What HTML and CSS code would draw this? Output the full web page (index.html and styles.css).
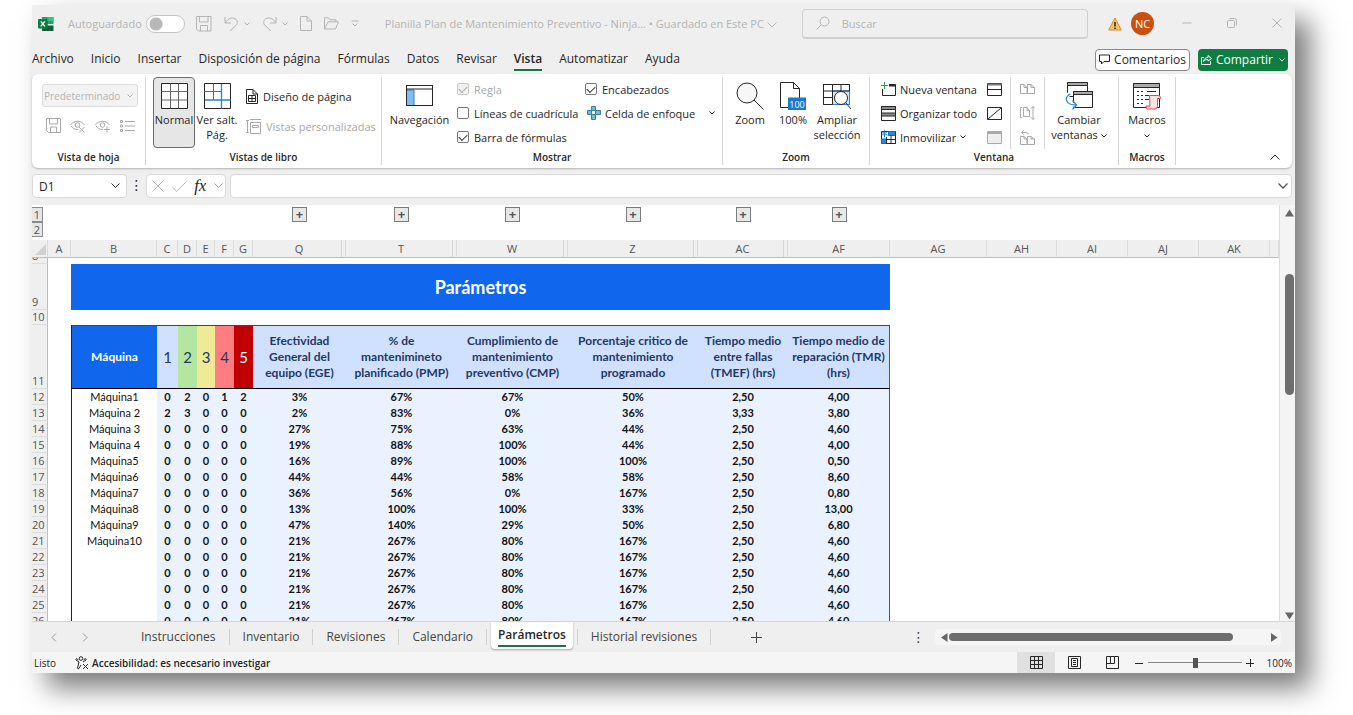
FILE: index.html
```html
<!DOCTYPE html>
<html lang="es">
<head>
<meta charset="utf-8">
<title>Planilla Plan de Mantenimiento Preventivo</title>
<link rel="stylesheet" href="styles.css">
</head>
<body>
<div class="window">
  <header class="titlebar">
    <svg class="app-logo" width="16" height="16" viewBox="0 0 16 16"><path fill="#21a366" d="M4 1h11.500v7H4z"/><path fill="#33c481" d="M9.500 1h6v4h-6z"/><path fill="#107c41" d="M4 5h5.500v5H4z"/><path fill="#185c37" d="M4 9.500h11.500v5.500H4z"/><rect y="3" width="9.500" height="9.500" rx="1" fill="#107c41"/><path d="M2.800 5.300l4 5M6.800 5.300l-4 5" stroke="#fff" stroke-width="1.300"/></svg>
    <label class="autosave">Autoguardado <input type="checkbox" class="switch"></label>
    <div class="quick">
      <button aria-label="Guardar"><svg width="16" height="16" viewBox="0 0 16 16"><path d="M.5.5h14.500v14.500H2.500l-2-2zM3.500.5v5.500h8.500V.5M4.500 15V9.500h7V15"/></svg></button>
      <button aria-label="Deshacer"><svg width="15" height="16" viewBox="0 0 15 16"><path d="M1 1v6h6M1.500 6.500C4 3 6 2 8.500 2c4 0 6 4 4 7L6 15"/></svg><svg class="chev" width="6" height="4" viewBox="0 0 6 4"><path d="M.5.5L3 3 5.500.5"/></svg></button>
      <button aria-label="Rehacer"><svg width="15" height="16" viewBox="0 0 15 16"><path d="M14 1v6H8M13.500 6.500C11 3 9 2 6.500 2c-4 0-6 4-4 7L9 15"/></svg><svg class="chev" width="6" height="4" viewBox="0 0 6 4"><path d="M.5.5L3 3 5.500.5"/></svg></button>
      <button aria-label="Nuevo"><svg width="12" height="15" viewBox="0 0 12 15"><path d="M.5.5h6.500l4.500 4.500v9.500H.5zM7 .5V5h4.500"/></svg></button>
      <button aria-label="Abrir"><svg width="15" height="13" viewBox="0 0 15 13"><path d="M.5 12V.8h4l1.500 2h6v2M.5 12L4 4.800h10.500L11.500 12z"/></svg></button>
      <button aria-label="Personalizar"><svg width="8" height="7" viewBox="0 0 8 7"><path d="M.5 1h7M1.500 3.500L4 6l2.500-2.500"/></svg></button>
    </div>
    <div class="doc-name">Planilla Plan de Mantenimiento Preventivo - Ninja... • Guardado en Este PC <svg width="10" height="6" viewBox="0 0 10 6"><path d="M.5.5L5 5 9.500.5"/></svg></div>
    <label class="search"><svg width="14" height="14" viewBox="0 0 14 14"><circle cx="8.500" cy="5.500" r="4.500"/><path d="M5.200 8.800L.5 13.500"/></svg><input type="search" placeholder="Buscar" aria-label="Buscar"></label>
    <svg class="warn" width="14" height="14" viewBox="0 0 14 14"><path d="M7 1L13.300 13H.7z" fill="#fbc566" stroke="#d98a2b"/><path d="M7 5v4.500M7 10.500V12" stroke="#222" stroke-width="1.500"/></svg>
    <span class="avatar">NC</span>
    <div class="win-buttons">
      <button aria-label="Minimizar"><svg width="10" height="10" viewBox="0 0 10 10"><path d="M.5 5h9"/></svg></button>
      <button aria-label="Restaurar"><svg width="10" height="10" viewBox="0 0 10 10"><rect x=".5" y="2.500" width="7" height="7" rx="1"/><path d="M2.500.5h5a2 2 0 012 2v5"/></svg></button>
      <button aria-label="Cerrar"><svg width="10" height="10" viewBox="0 0 10 10"><path d="M.5.5l9 9M9.500.5l-9 9"/></svg></button>
    </div>
  </header>

  <nav class="menu">
    <a href="#">Archivo</a><a href="#">Inicio</a><a href="#">Insertar</a><a href="#">Disposición de página</a><a href="#">Fórmulas</a><a href="#">Datos</a><a href="#">Revisar</a><a href="#" class="current">Vista</a><a href="#">Automatizar</a><a href="#">Ayuda</a>
    <div class="menu-actions">
      <button class="comments"><svg width="11" height="11" viewBox="0 0 11 11"><path d="M.5 1h10v6.500H5L2.500 10V7.500h-2z"/></svg>Comentarios</button>
      <button class="share"><svg width="11" height="11" viewBox="0 0 11 11"><path d="M3 3.500H.5v7h9V7M2.500 7.500C3 4.500 5 3.500 7 3.500V1.500L10.500 4.500 7 7V5.500c-2 0-3.500.5-4.500 2z"/></svg>Compartir<svg width="6" height="4" viewBox="0 0 6 4"><path d="M.5.5L3 3 5.500.5"/></svg></button>
    </div>
  </nav>

  <section class="ribbon">
    <div class="group g-sheetview">
      <div class="content col">
        <div class="select"><select disabled aria-label="Vista de hoja"><option>Predeterminado</option></select><svg width="6" height="4" viewBox="0 0 6 4"><path d="M.5.5L3 3 5.500.5"/></svg></div>
        <div class="row dim small-icons">
          <button aria-label="Mantener"><svg width="15" height="15" viewBox="0 0 15 15"><path d="M.5.5h14v14H2.500l-2-2zM3.500.5v5.500h8V.5M4.500 14.500V9h6v5.500"/></svg></button>
          <button aria-label="Salir"><svg width="16" height="14" viewBox="0 0 16 14"><path d="M.5 6C4 1 11 1 14.500 6M1 7c2 2.500 4 3.500 7 3.500"/><circle cx="7.500" cy="6" r="2.300"/><path d="M9 8l5.500 5.500M14.500 8L9 13.500"/></svg></button>
          <button aria-label="Nueva"><svg width="16" height="14" viewBox="0 0 16 14"><path d="M.5 6C4 1 11 1 14.500 6M1 7c2 2.500 4 3.500 7 3.500"/><circle cx="7.500" cy="6" r="2.300"/><path d="M12 7.500v6M9 10.500h6"/></svg></button>
          <button aria-label="Opciones"><svg width="15" height="12" viewBox="0 0 15 12"><path d="M5 1.500h10M5 6h10M5 10.500h10"/><path d="M.5.5h2v2h-2zM.5 5h2v2h-2zM.5 9.500h2v2h-2z"/></svg></button>
        </div>
      </div>
      <h2>Vista de hoja</h2>
    </div>
    <div class="group g-books">
      <div class="content">
        <button class="big pressed"><svg width="27" height="26" viewBox="0 0 27 26"><path class="w" d="M.5.5h26v25H.5z"/><path d="M9.500.5v25M17.500.5v25M.5 8.500h26M.5 17h26" stroke="#666"/></svg><span>Normal</span></button>
        <button class="big brk"><svg width="27" height="26" viewBox="0 0 27 26"><path class="w" d="M.5.5h26v25H.5z"/><path stroke="#666" d="M9.500.5v16M.5 8.500h17"/><path stroke="#1e88c9" stroke-width="1.300" d="M17.500 1v24.500M1 17h25.500"/></svg><span>Ver salt.<br>Pág.</span></button>
        <div class="stack two">
          <button><svg width="12" height="15" viewBox="0 0 12 15"><path class="w" d="M.5.5h6.500l4.500 4.500v9.500H.5zM7 .5V5h4.500"/><path d="M2.500 6.500h7v6h-7zM6 6.500v6M2.500 9.500h7"/></svg>Diseño de página</button>
          <button class="dim"><svg width="15" height="15" viewBox="0 0 15 15"><path d="M1.500 1.500v12M0 1.500h3M0 13.500h3M4 .5h11M4.500 3.500h10v11h-10zM6.500 6.500h6v2h-6z"/></svg>Vistas personalizadas</button>
        </div>
      </div>
      <h2>Vistas de libro</h2>
    </div>
    <div class="group g-show">
      <div class="content">
        <button class="big nav"><svg width="27" height="26" viewBox="0 0 27 26"><path class="w" d="M.5 2.500h26v20H.5z"/><path fill="#83bdeb" stroke="#2b7cc1" d="M.5 7h7.500v15.500H.5z"/><path d="M.5 2.500h26v20H.5zM.5 6h26"/></svg><span>Navegación</span></button>
        <div class="stack checks">
          <label class="dim"><input type="checkbox" checked disabled>Regla</label>
          <label><input type="checkbox">Líneas de cuadrícula</label>
          <label><input type="checkbox" checked>Barra de fórmulas</label>
        </div>
        <div class="stack checks">
          <label><input type="checkbox" checked>Encabezados</label>
          <button class="focus"><svg width="14" height="14" viewBox="0 0 14 14"><path fill="#74b9e4" stroke="#3a7ca8" d="M4.500.5h4v4h5v4h-5v5h-4v-5h-4v-4h4z"/><path fill="#fff" stroke="#3a8a6a" d="M4.500 4.500h4v4h-4z"/></svg>Celda de enfoque<svg class="chev" width="6" height="4" viewBox="0 0 6 4"><path d="M.5.5L3 3 5.500.5"/></svg></button>
        </div>
      </div>
      <h2>Mostrar</h2>
    </div>
    <div class="group g-zoom">
      <div class="content">
        <button class="big zoom"><svg width="28" height="28" viewBox="0 0 28 28"><circle cx="11" cy="11" r="10" fill="#f7f7f7"/><path d="M18 18l9.500 9.500"/></svg><span>Zoom</span></button>
        <button class="big hundred"><svg width="26" height="28" viewBox="0 0 26 28"><path class="w" d="M.5.5h13l6 6v19H.5zM13.500.5v6h6"/><path fill="#1979ca" stroke="none" d="M8 15.500h18V28H8z"/><text x="17" y="25.500" text-anchor="middle" class="tiny">100</text></svg><span>100%</span></button>
        <button class="big fit"><svg width="28" height="28" viewBox="0 0 28 28"><path class="w" d="M.5 2.500h26v20H.5z"/><path fill="#cde6f7" stroke="#2b88d8" d="M9.500 9h17v13.500h-17z"/><path d="M.5 2.500h26v6.500H.5zM9.500 2.500v20M18 2.500V9M.5 15.500h9M.5 22.500h9"/><circle cx="18" cy="16" r="6.500" fill="#fff"/><path d="M22.500 20.500l5.500 6.500"/></svg><span>Ampliar<br>selección</span></button>
      </div>
      <h2>Zoom</h2>
    </div>
    <div class="group g-window">
      <div class="content">
        <div class="stack">
          <button><svg width="15" height="14" viewBox="0 0 15 14"><path d="M8 2.500h6.500v11H1.500V7"/><path d="M8 3.500h6.500" stroke-width="2"/><path stroke="#2e9e4f" d="M3.500 0v7M0 3.500h7"/></svg>Nueva ventana</button>
          <button><svg width="15" height="15" viewBox="0 0 15 15"><path class="w" d="M.5.500h14v14H.5z"/><path fill="#8a8a8a" d="M.5.5h14v3H.5zM.5 7h14v3H.5z"/></svg>Organizar todo</button>
          <button><svg width="15" height="15" viewBox="0 0 15 15"><path class="w" d="M.5 1.500h14v12H.5z"/><path fill="#2b88d8" stroke="#1b6db3" d="M7.500 1.500h7v4h-7zM.5 9h5v4.500h-5z"/><path stroke="#1b88c9" d="M3.500 0v7M.5 1.700l6 3.600M6.500 1.700l-6 3.600"/><path d="M5.500 7v6.500M10 5.500v8M14.500 2v11.500h-9M5.500 9.500h9"/></svg>Inmovilizar<svg class="chev" width="6" height="4" viewBox="0 0 6 4"><path d="M.5.5L3 3 5.500.5"/></svg></button>
        </div>
        <div class="stack icons">
          <button aria-label="Dividir"><svg width="15" height="13" viewBox="0 0 15 13"><path class="w" d="M.5.5h14v12H.5zM.5 6.500h14"/><path d="M.5 1.500h14" stroke-width="2" stroke="#777"/></svg></button>
          <button aria-label="Ocultar"><svg width="15" height="13" viewBox="0 0 15 13"><path class="w" d="M.5.5h14v12H.5zM1 12L14 1"/></svg></button>
          <button aria-label="Mostrar" class="dim"><svg width="15" height="13" viewBox="0 0 15 13"><path fill="#eee" d="M.5.5h14v12H.5z"/><path d="M.5 2h14" stroke-width="2"/></svg></button>
        </div>
        <div class="stack icons dim lined">
          <button aria-label="Ver en paralelo"><svg width="15" height="13" viewBox="0 0 15 13"><path d="M.5 1.500H4l3 3v6H.5zM4 1.500v3h3M7.500 1.500H11l3.500 3v6h-7zM11 1.500v3h3.500"/></svg></button>
          <button aria-label="Desplazamiento sincrónico"><svg width="15" height="14" viewBox="0 0 15 14"><path d="M2 1.500H.5v10H2M3.500 1.500h3.500l2.500 3v6h-6zM7 1.500v3h2.500M13 .5v13M11 2.500l2-2 2 2M11 11.500l2 2 2-2"/></svg></button>
          <button aria-label="Restablecer"><svg width="15" height="15" viewBox="0 0 15 15"><path d="M.5 6.500H4l3 2.500v5.500H.5zM4 6.500V9h3M7.500 6.500H11l3.500 2.500v5.500h-7zM11 6.500V9h3.500M3.500.5L1.500 2.500l2 2M1.500 2.500H6q2 0 2 2"/></svg></button>
        </div>
        <button class="big switcher"><svg width="28" height="28" viewBox="0 0 28 28"><path class="w" d="M2.500.5h20v14h-20z"/><path fill="#aaa" d="M2.500.5h20v3h-20z"/><path class="w" d="M8.500 9.500h19v16h-19z"/><path fill="#aaa" d="M8.500 9.500h19v3h-19z"/><path fill="none" stroke="#fff" stroke-width="4" d="M5.500 11C-1 15 0 23 10 23"/><path stroke="#2b88d8" stroke-width="1.300" d="M5.500 12C-1 15 0 23 11 23M7.500 18.500l4 4.500-4 4.500"/></svg><span>Cambiar<br>ventanas <svg class="chev" width="6" height="4" viewBox="0 0 6 4"><path d="M.5.5L3 3 5.500.5"/></svg></span></button>
      </div>
      <h2>Ventana</h2>
    </div>
    <div class="group g-macros">
      <div class="content">
        <button class="big"><svg width="28" height="28" viewBox="0 0 28 28"><path class="w" d="M.5 1.500h26v24H.5z"/><path fill="#aaa" d="M.5 1.500h26v4H.5z"/><path stroke-dasharray="2 2" d="M4 9.500h7M4 13.500h7M4 17.500h7M4 21.500h7"/><path d="M14 9.500h9M12 13.500h4M12 17.500h4"/><path fill="#fbe3e1" stroke="#d8504a" d="M16.500 13.500h9q2 0 2 3h-3v7q0 3.500-2.500 3.500h-8q-1 0-1-3h4z"/></svg><span>Macros<br><svg class="chev" width="6" height="4" viewBox="0 0 6 4"><path d="M.5.5L3 3 5.500.5"/></svg></span></button>
      </div>
      <h2>Macros</h2>
    </div>
    <button class="collapse" aria-label="Contraer la cinta"><svg width="10" height="6" viewBox="0 0 10 6"><path d="M.5 5.500L5 1l4.500 4.500"/></svg></button>
  </section>

  <div class="formula-bar">
    <div class="name-box"><input type="text" value="D1" aria-label="Cuadro de nombres"><svg width="9" height="6" viewBox="0 0 9 6"><path d="M.5.5l4 4 4-4"/></svg></div>
    <span class="dots">⋮</span>
    <div class="fx"><button aria-label="Cancelar"><svg width="12" height="12" viewBox="0 0 12 12"><path stroke="#bbb" d="M.5.5l11 11M11.500.5l-11 11"/></svg></button><button aria-label="Aceptar"><svg width="15" height="11" viewBox="0 0 15 11"><path stroke="#bbb" d="M.5 6l4 4.500L14.500.5"/></svg></button><button class="fx-label">fx</button><button aria-label="Funciones"><svg width="9" height="6" viewBox="0 0 9 6"><path stroke="#999" d="M.5.5l4 4 4-4"/></svg></button></div>
    <div class="formula"><input type="text" aria-label="Barra de fórmulas"><svg width="10" height="6" viewBox="0 0 10 6"><path stroke="#555" stroke-width="1.300" d="M.5.5L5 5 9.500.5"/></svg></div>
  </div>

  <main class="sheet">
    <div class="grid">
      <table>
        <colgroup><col class="w16"><col class="w23"><col class="w86"><col class="w21"><col class="w19"><col class="w18"><col class="w19"><col class="w19"><col class="w93"><col class="w111"><col class="w111"><col class="w130"><col class="w90"><col class="w102"><col class="w97"><col class="w70"><col class="w71"><col class="w71"><col class="w71"><col></colgroup>
        <thead>
          <tr class="outline"><td><button class="level">1</button><button class="level">2</button></td><td colspan="7"></td><td><button class="plus">+</button></td><td><button class="plus">+</button></td><td><button class="plus">+</button></td><td><button class="plus">+</button></td><td><button class="plus">+</button></td><td><button class="plus">+</button></td><td colspan="6"></td></tr>
          <tr class="letters"><th class="corner"><svg width="12" height="12" viewBox="0 0 12 12"><path d="M12 1v11H1z"/></svg></th><th>A</th><th>B</th><th>C</th><th>D</th><th>E</th><th>F</th><th>G</th><th class="hid">Q</th><th class="hid">T</th><th class="hid">W</th><th class="hid">Z</th><th class="hid">AC</th><th>AF</th><th>AG</th><th>AH</th><th>AI</th><th>AJ</th><th>AK</th><th></th></tr>
        </thead>
        <tbody id="rows">
          <tr class="r8"><th><div>8</div></th><td colspan="19"></td></tr>
          <tr class="r9"><th>9</th><td></td><td colspan="12" class="banner">Parámetros</td><td colspan="6"></td></tr>
          <tr class="r10"><th>10</th><td colspan="19"></td></tr>
          <tr class="r11"><th>11</th><td></td><td class="machine">Máquina</td><td class="lv">1</td><td class="lv l2">2</td><td class="lv l3">3</td><td class="lv l4">4</td><td class="lv l5">5</td><td>Efectividad<br>General del<br>equipo (EGE)</td><td>% de<br>mantenimineto<br>planificado (PMP)</td><td>Cumplimiento de<br>mantenimiento<br>preventivo (CMP)</td><td>Porcentaje critico de<br>mantenimiento<br>programado</td><td>Tiempo medio<br>entre fallas<br>(TMEF) (hrs)</td><td class="last">Tiempo medio de<br>reparación (TMR)<br>(hrs)</td><td class="blank" colspan="6"></td></tr>
        </tbody>
      </table>
    </div>
    <div class="vscroll"><svg width="9" height="8" viewBox="0 0 9 8"><path d="M4.500.5L9 7.500H0z"/></svg><span></span><svg width="9" height="8" viewBox="0 0 9 8"><path d="M4.500 7.500L9 .5H0z"/></svg></div>
  </main>

  <footer class="tabs">
    <button class="arrow" aria-label="Anterior"><svg width="6" height="9" viewBox="0 0 6 9"><path d="M5 .5l-4 4 4 4"/></svg></button>
    <button class="arrow" aria-label="Siguiente"><svg width="6" height="9" viewBox="0 0 6 9"><path d="M1 .5l4 4-4 4"/></svg></button>
    <div class="tab-list"><button>Instrucciones</button><button>Inventario</button><button>Revisiones</button><button>Calendario</button><button class="active"><span>Parámetros</span></button><button class="hist">Historial revisiones</button></div>
    <button class="add" aria-label="Nueva hoja"><svg width="11" height="11" viewBox="0 0 11 11"><path d="M5.500 0v11M0 5.500h11"/></svg></button>
    <span class="dots">⋮</span>
    <div class="hscroll"><svg width="7" height="9" viewBox="0 0 7 9"><path d="M0 4.500L6.500 0v9z"/></svg><span></span><svg width="7" height="9" viewBox="0 0 7 9"><path d="M6.500 4.500L0 0v9z"/></svg></div>
  </footer>
  <footer class="status">
    <span class="ready">Listo</span>
    <svg width="14" height="14" viewBox="0 0 14 14"><circle cx="6" cy="2.500" r="1.800"/><path d="M3.500 4L1.500 2.500q-1 .5-.5 1.500l3 2L2.500 12q.5 1.500 1.500.5L6 9M8.500 4l2-1.500q1 .5.500 1.500l-3 2M8 8l5 5M13 8l-5 5"/></svg>
    <strong>Accesibilidad: es necesario investigar</strong>
    <div class="views">
      <button class="on" aria-label="Normal"><svg width="13" height="13" viewBox="0 0 13 13"><path d="M.5.500h12v12H.5zM4.500.5v12M8.500.5v12M.5 4.500h12M.5 8.500h12"/></svg></button>
      <button aria-label="Diseño de página"><svg width="13" height="13" viewBox="0 0 13 13"><path d="M.5.5h12v12H.5zM3.500 2.500h6v8h-6zM5 4.500h3M5 6.500h3M5 8.500h3"/></svg></button>
      <button aria-label="Saltos de página"><svg width="13" height="13" viewBox="0 0 13 13"><path d="M.5.5h12v12H.5zM4.500.5v7M8.500.5v7M.5 7.500h8"/></svg></button>
    </div>
    <button class="step" aria-label="Alejar"><svg width="8" height="8" viewBox="0 0 8 8"><path d="M0 4.500h8"/></svg></button>
    <input type="range" min="0" max="100" value="50" aria-label="Zoom">
    <button class="step" aria-label="Acercar"><svg width="8" height="8" viewBox="0 0 8 8"><path d="M0 4.500h8M4.500 0v8"/></svg></button>
    <span class="pct">100%</span>
  </footer>
</div>
<script src="rows.js"></script>
</body>
</html>
```
FILE: rows.js
```js
const data = [
  ["Máquina1", 0, 2, 0, 1, 2, "3%", "67%", "67%", "50%", "2,50", "4,00"],
  ["Máquina 2", 2, 3, 0, 0, 0, "2%", "83%", "0%", "36%", "3,33", "3,80"],
  ["Máquina 3", 0, 0, 0, 0, 0, "27%", "75%", "63%", "44%", "2,50", "4,60"],
  ["Máquina 4", 0, 0, 0, 0, 0, "19%", "88%", "100%", "44%", "2,50", "4,00"],
  ["Máquina5", 0, 0, 0, 0, 0, "16%", "89%", "100%", "100%", "2,50", "0,50"],
  ["Máquina6", 0, 0, 0, 0, 0, "44%", "44%", "58%", "58%", "2,50", "8,60"],
  ["Máquina7", 0, 0, 0, 0, 0, "36%", "56%", "0%", "167%", "2,50", "0,80"],
  ["Máquina8", 0, 0, 0, 0, 0, "13%", "100%", "100%", "33%", "2,50", "13,00"],
  ["Máquina9", 0, 0, 0, 0, 0, "47%", "140%", "29%", "50%", "2,50", "6,80"],
  ["Máquina10", 0, 0, 0, 0, 0, "21%", "267%", "80%", "167%", "2,50", "4,60"]
];
const rest = ["", 0, 0, 0, 0, 0, "21%", "267%", "80%", "167%", "2,50", "4,60"];
while (data.length < 15) data.push(rest);

const body = document.getElementById("rows");
data.forEach((cells, i) => {
  const tr = body.insertRow();
  tr.className = "data";
  const head = document.createElement("th");
  head.textContent = 12 + i;
  tr.append(head);
  tr.insertCell();
  cells.forEach((value, k) => {
    const td = tr.insertCell();
    td.textContent = value;
    if (k === 0) td.className = "name";
    if (k === cells.length - 1) td.className = "last";
  });
  const blank = tr.insertCell();
  blank.colSpan = 6;
  blank.className = "blank";
});
```
FILE: styles.css
```css
* { box-sizing: border-box; }
html, body { height: 100%; }
body {
  margin: 0;
  padding: 5px 58px 42px 32px;
  background: #fff;
  font-family: "Open Sans", "Noto Sans", sans-serif;
  font-size: 11px;
  color: #262626;
  overflow: hidden;
}
button, input, select { font: inherit; color: inherit; margin: 0; }
button { border: 0; padding: 0; background: none; white-space: nowrap; }
svg { fill: none; stroke: currentColor; flex: none; }
svg .w { fill: #fff; }
h2 { margin: 0; font-size: 10px; font-weight: 600; line-height: 16px; text-align: center; }

.window {
  height: 100%;
  display: flex;
  flex-direction: column;
  background: #efefef;
  box-shadow: 15px 15px 26px rgba(0, 0, 0, .52);
}

.titlebar { display: flex; align-items: center; height: 37px; color: #b4b4b4; flex: none; }
.app-logo { margin-left: 6px; stroke: none; }
.autosave { display: flex; align-items: center; gap: 4px; margin-left: 14px; }
.switch {
  appearance: none;
  width: 39px; height: 18px;
  border: 1px solid #c4c4c4; border-radius: 9px;
  background: radial-gradient(circle at 9px 8px, #b8b8b8 6px, #fff 7px);
}
.quick { display: flex; align-items: center; margin-left: 11px; }
.quick button { display: flex; align-items: center; gap: 5px; margin-right: 12px; }
.doc-name { margin-left: 14px; white-space: nowrap; flex: 0 0 417px; }
.search {
  display: flex; align-items: center; gap: 12px;
  flex: 1; height: 30px; padding-left: 13px;
  border: 1px solid #d0d0d0; border-bottom-width: 2px; border-radius: 4px;
}
.search input { flex: 1; min-width: 0; border: 0; padding: 0; background: none; outline: 0; }
.search input::placeholder { color: #b4b4b4; }
.warn { margin-left: 20px; }
.avatar {
  width: 23px; height: 23px; margin-left: 9px; border-radius: 50%;
  background: #ca5010; color: #fff; line-height: 23px; text-align: center;
}
.win-buttons { display: flex; gap: 35px; margin: 0 13px 0 28px; }

.menu { display: flex; align-items: center; gap: 17px; height: 32px; padding: 3px 7px 0 0; font-size: 12px; flex: none; }
.menu a { color: inherit; text-decoration: none; line-height: 20px; white-space: nowrap; }
.menu a { border-bottom: 2px solid transparent; }
.menu .current { font-weight: 600; border-bottom-color: #1e7145; }
.menu-actions { display: flex; gap: 8px; margin-left: auto; }
.menu-actions button { display: flex; align-items: center; justify-content: center; gap: 4px; height: 22px; border-radius: 4px; }
.menu-actions .comments { width: 95px; background: #fff; border: 1px solid #8a8a8a; }
.menu-actions .share { width: 90px; background: #107c41; color: #fff; }
.share svg:last-child { margin-left: 2px; }

.ribbon {
  display: flex; height: 94px; margin-right: 3px; flex: none; position: relative;
  background: #fff; border-radius: 6px; box-shadow: 0 1px 2px rgba(0, 0, 0, .25);
}
.group { display: flex; flex-direction: column; height: 88px; margin-top: 3px; border-right: 1px solid #d6d6d6; }
.content { display: flex; flex: 1; min-height: 0; }
.col { flex-direction: column; }
.row { display: flex; align-items: center; }
.dim { color: #a9a9a9; }
.g-sheetview { width: 114px; }
.g-books { width: 236px; }
.g-show { width: 341px; }
.g-zoom { width: 147px; }
.g-window { width: 249px; }
.g-macros { width: 57px; }

.select { display: flex; align-items: center; width: 96px; height: 23px; margin: 7px 0 0 10px; padding: 0 4px 0 1px; border: 1px solid #dcdcdc; border-radius: 3px; background: #f3f3f3; color: #b4b4b4; font-size: 10px; }
.select select { appearance: none; flex: 1; min-width: 0; border: 0; padding: 0; background: none; opacity: 1; }
.small-icons { gap: 9px; margin: 11px 0 0 14px; }
.small-icons button { display: flex; }

.big { display: flex; flex-direction: column; align-items: center; align-self: flex-start; height: 71px; padding-top: 5px; line-height: 15px; text-align: center; border: 1px solid transparent; }
.big > svg { height: 28px; margin-bottom: 2px; }
.big .chev { vertical-align: middle; }
.pressed { width: 42px; margin-left: 7px; background: #e6e6e6; border-color: #6b6b6b; border-radius: 4px; }
.big { padding-top: 4px; }
.brk { width: 44px; }

.stack { display: flex; flex-direction: column; }
.stack > * { display: flex; align-items: center; gap: 4px; height: 24px; }
.two { margin-left: 7px; padding-top: 4px; }
.two > * { height: 30px; gap: 5px; }
.nav { width: 75px; }
.checks > label { gap: 5px; white-space: nowrap; }
.checks input {
  appearance: none; width: 12px; height: 12px; flex: none;
  border: 1px solid #767676; border-radius: 2px; background: #fff;
  display: grid; place-items: center;
}
.checks input:checked::before { content: ""; width: 7px; height: 4px; margin-bottom: 2px; border: solid #333; border-width: 0 0 1px 1px; transform: rotate(-45deg); }
.checks input:disabled { border-color: #c8c8c8; background: #f0f0f0; }
.checks input:disabled::before { border-color: #aaa; }
.checks { flex: 0 0 128px; }
.checks .focus { padding-left: 2px; }
.focus .chev { margin-left: 10px; }
.zoom { width: 54px; }
.hundred { width: 32px; }
.fit { width: 56px; }
.tiny { font-size: 9px; fill: #fff; stroke: none; }
.g-window .stack { margin-left: 11px; }
.g-window .stack:first-child { width: 95px; }
.g-window .lined { margin-left: 8px; padding: 0 9px; border: solid #d6d6d6; border-width: 0 1px; height: 72px; }
.switcher { width: 68px; }
.g-macros .big { width: 56px; }
.collapse { position: absolute; right: 12px; bottom: 8px; display: flex; }

.formula-bar { display: flex; height: 37px; padding: 6px 3px 7px 0; flex: none; font-size: 12px; }
.name-box, .fx, .formula { display: flex; align-items: center; height: 24px; background: #fff; border: 1px solid #d9d9d9; border-radius: 4px; }
.name-box { width: 95px; padding: 0 6px; }
.name-box input, .formula input { flex: 1; min-width: 0; border: 0; padding: 0; background: none; outline: 0; }
.dots { width: 19px; text-align: center; font: 14px/22px "DejaVu Sans", sans-serif; }
.fx { width: 80px; padding: 0 2px 0 5px; justify-content: space-between; }
.fx button { display: flex; align-items: center; }
.fx .fx-label { font: italic 17px/20px "Liberation Serif", serif; }
.formula { flex: 1; margin-left: 4px; padding: 0 3px; }

.sheet { display: flex; flex: 1; min-height: 0; background: #fff; border-bottom: 1px solid #d6d6d6; }
.grid { flex: 1; min-width: 0; overflow: hidden; }
table { width: 100%; table-layout: fixed; border-collapse: separate; border-spacing: 0; }
th, td { padding: 0; text-align: center; }
.w16 { width: 16px; } .w18 { width: 18px; } .w19 { width: 19px; } .w21 { width: 21px; }
.w23 { width: 23px; } .w70 { width: 70px; } .w71 { width: 71px; } .w86 { width: 86px; }
.w90 { width: 90px; } .w93 { width: 93px; } .w97 { width: 97px; } .w102 { width: 102px; }
.w111 { width: 111px; } .w130 { width: 130px; }
.outline td { height: 35px; vertical-align: top; padding-top: 2px; }
.level { display: block; width: 11px; height: 15px; background: #e6e6e6; border: solid #8a8a8a; border-width: 1px 1px 1px 0; line-height: 13px; color: #555; }
.plus { width: 15px; height: 15px; border: 1px solid #7c7c7c; background: #e8e8e8; font-weight: 700; font-size: 13px; line-height: 13px; color: #555; }
.letters th { height: 18px; background: #efefef; border-bottom: 1px solid #bdbdbd; border-right: 1px solid #dcdcdc; font-weight: 400; line-height: 16px; color: #555; }
.letters .hid { background: linear-gradient(#d6d6d6, #d6d6d6) right 3px top / 1px 100% no-repeat #efefef; }
.corner svg { display: block; margin-left: 2px; fill: #d0d0d0; stroke: none; }
tbody th { background: #efefef; border-right: 1px solid #bdbdbd; border-bottom: 1px solid #dcdcdc; font-weight: 400; line-height: 15px; text-align: left; color: #555; vertical-align: bottom; }
.r8 div { height: 5px; overflow: hidden; display: flex; align-items: flex-end; }
.r9 { height: 46px; }
.r10 th { line-height: 14px; }
.r11 { height: 64px; }
.banner { background: #1067ee; color: #fff; font: bold 18px/24px Lato, sans-serif; }
.r11 td { font: bold 12px/16px Lato, sans-serif; color: #1f3864; background: #d0e0ff; border-top: 1px solid #444; border-bottom: 1px solid #000; white-space: nowrap; }
.r11 td:nth-child(2), .r11 .blank { background: none; border: 0; }
.r11 .machine { background: #1067ee; color: #fff; border-left: 1px solid #222; }
.r11 .lv { font-size: 15px; font-weight: 400; }
.r11 .l2 { background: #b3e6a1; }
.r11 .l3 { background: #eeea96; }
.r11 .l4 { background: #ff7c80; }
.r11 .l5 { background: #c00000; color: #fff; }
.data td { height: 16px; background: #eaf1ff; font: bold 11px/15px Lato, sans-serif; color: #111; vertical-align: top; }
.data td:nth-child(2), .data .blank { background: none; }
.data .name { background: #fff; font-weight: 400; border-left: 1px solid #222; }
.r11 .last, .data .last { border-right: 1px solid #555; }
.vscroll { width: 16px; display: flex; flex-direction: column; align-items: flex-end; justify-content: space-between; padding: 4px 1px 1px 0; background: #f4f4f4; border-left: 1px solid #dcdcdc; }
.vscroll svg, .hscroll svg { fill: #666; stroke: none; }
.vscroll span { width: 9px; height: 121px; border-radius: 5px; background: #6e6e6e; margin-bottom: 160px; }

.tabs { display: flex; align-items: center; height: 30px; flex: none; font-size: 12px; color: #444; }
.arrow { display: flex; width: 31px; justify-content: center; color: #999; }
.arrow:first-child { margin-left: 6px; }
.tab-list { display: flex; align-items: center; align-self: flex-start; height: 30px; margin-left: 28px; }
.tab-list button { height: 16px; line-height: 16px; padding: 0 13px; border-right: 1px solid #cfcfcf; }
.tab-list .active { height: 27px; align-self: flex-start; margin-left: 4px; padding: 0 7px; background: #fff; border: 0; border-radius: 0 0 4px 4px; box-shadow: 0 1px 2px rgba(0, 0, 0, .3); font-weight: 600; color: #262626; }
.active span { display: block; line-height: 20px; border-bottom: 2px solid #1e7145; }
.tab-list .hist { margin-left: 4px; border-left: 1px solid #cfcfcf; }
.add { display: flex; margin-left: 40px; }
.tabs .dots { margin-left: auto; color: #444; }
.hscroll { width: 346px; height: 16px; margin: 0 14px 0 7px; padding: 0 3px 0 6px; display: flex; align-items: center; border-radius: 4px; background: #f5f5f5; }
.hscroll span { width: 284px; height: 8px; border-radius: 4px; background: #6e6e6e; margin: 0 auto 0 1px; }

.status { display: flex; align-items: center; height: 21px; background: #f5f5f5; font-size: 10px; flex: none; }
.ready { margin: 0 19px 0 2px; }
.status strong { margin-left: 3px; font-weight: 600; }
.views { display: flex; margin-left: auto; height: 100%; }
.views button { width: 38px; display: grid; place-items: center; }
.views .on { background: #e0e0e0; }
.step { display: flex; margin-left: 4px; }
.status input { appearance: none; width: 94px; height: 12px; margin-left: 5px; background: linear-gradient(#888, #888) center / 100% 1px no-repeat; }
.status input::-webkit-slider-thumb { appearance: none; width: 5px; height: 10px; background: #555; }
.pct { width: 41px; padding-right: 3px; text-align: right; }
```
